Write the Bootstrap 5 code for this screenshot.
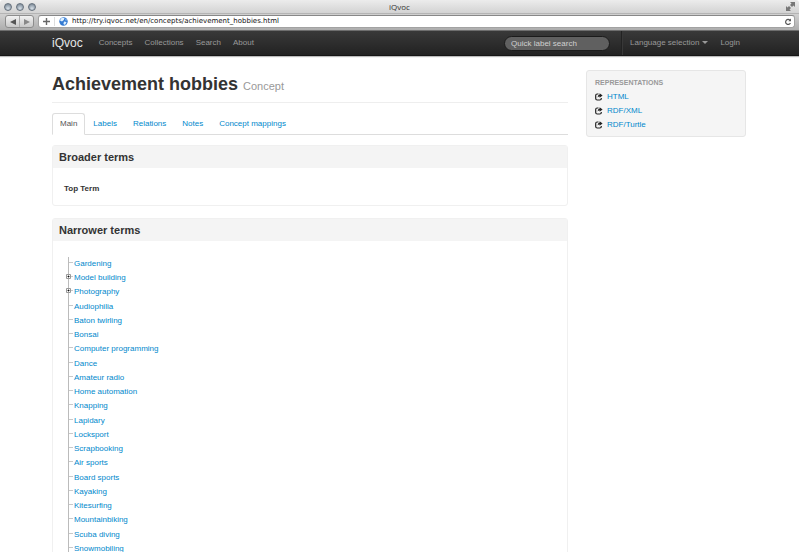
<!DOCTYPE html>
<html lang="en">
<head>
<meta charset="utf-8">
<meta name="viewport" content="width=device-width, initial-scale=1">
<title>iQvoc</title>
<link href="https://cdn.jsdelivr.net/npm/bootstrap@5.3.0/dist/css/bootstrap.min.css" rel="stylesheet">
<style>
html, body { height: 100%; }
body { font-family: "Liberation Sans", Arial, sans-serif; font-size: 8px; line-height: 14px; color: #333; background: #fff; }
a { color: #0088cc; text-decoration: none; }
.viewport { height: 100vh; }

/* browser window */
.window-top { background: linear-gradient(#ececec, #d2d2d2 45%, #adadad); border-bottom: 1px solid #6e6e6e; border-radius: 3px 3px 0 0; }
.title-row { height: 14px; padding: 0 4px; font-family: "Open Sans", "Noto Sans", sans-serif; font-size: 8px; line-height: 14px; border-bottom: 1px solid #b4b4b4; }
.lights, .expand { width: 36px; }
.light { width: 8px; height: 8px; border: 1px solid #66717d; border-radius: 50%; background: radial-gradient(circle at 50% 75%, #d8e1e9, #8794a1 75%); }
.tool-row { height: 16px; padding: 1px 4px 2px 5px; }
.history { height: 13px; width: 29px; border: 1px solid #8d8d8d; border-radius: 3px; background: linear-gradient(#f2f2f2, #c8c8c8); }
.history button, .plain-btn { border: 0; background: none; padding: 0; line-height: 0; }
.history button + button { border-left: 1px solid #aaa; }
.address { height: 13px; background: #fff; border: 1px solid #a2a2a2; border-top-color: #888; border-radius: 3px; padding: 0 2px 0 0; }
.address .plus { width: 16px; height: 9px; border-right: 1px solid #ddd; }
.url { border: 0; outline: 0; padding: 0; background: none; font-family: "DejaVu Sans", sans-serif; font-size: 7px; line-height: 11px; height: 11px; color: #111; }

/* site bar */
.site-bar { height: 25px; padding: 0; background: linear-gradient(#393939, #222); border-bottom: 1px solid #161616; box-shadow: 0 1px 1px #bbb; }
.side-pad { padding-left: 52px; padding-right: 53px; }
.site-bar .navbar-brand { font-size: 12px; line-height: 24px; padding: 0; margin: 0 10px 0 0; color: #e6e6e6; }
.site-bar .navbar-nav .nav-link { font-size: 8px; line-height: 24px; padding: 0 6px; color: #999; }
.quick { width: 106px; height: 15px; border: 1px solid #1b1b1b; border-radius: 8px; background: #606060; color: #ddd; font-size: 8px; padding: 0 6px; }
.quick::placeholder { color: #d0d0d0; opacity: 1; }
.split { width: 2px; height: 24px; border-left: 1px solid #222; border-right: 1px solid #383838; margin: 0 1px 0 11px; }
.site-bar .dropdown-toggle::after { border-width: 3px 3px 0; margin-left: 3px; vertical-align: 1px; }

/* content */
.page-row { --bs-gutter-x: 18px; padding-top: 14px; }
.page-title { font-size: 18px; line-height: 24px; font-weight: 700; padding: 2px 0 4px; margin: 0 0 10px; border-bottom: 1px solid #eee; }
.page-title small { font-size: 11px; font-weight: 400; color: #999; }
.page-tabs { border-bottom: 1px solid #ddd; margin-bottom: 10px; }
.page-tabs .nav-link { font-size: 8px; line-height: 14px; padding: 3px 7px; color: #0088cc; border-radius: 3px 3px 0 0; }
.page-tabs .nav-link.active { color: #555; border-color: #ddd #ddd #fff; }
.panel { border: 1px solid #f0f0f0; border-radius: 3px; margin-bottom: 12px; }
.panel-title { margin: 0; background: #f4f4f4; font-size: 11px; line-height: 22px; font-weight: 700; padding: 0 6px; }
.panel-text { padding: 14px 11px 9px; }
.panel-tree { padding: 16px 12px; }
.tree { display: grid; min-height: 299px; margin: 0; padding: 0; list-style: none; }
.tree li { position: relative; border-left: 1px solid #bbb; margin-left: 3px; padding-left: 5px; }
.tree li::before { content: ""; position: absolute; left: 0; top: 5px; width: 4px; border-top: 1px solid #c8c8c8; }
.tree button { position: absolute; left: -3px; top: 3px; width: 5px; height: 5px; padding: 0; border: 0; background: #fff; line-height: 0; z-index: 1; }
.tree svg { display: block; }
.side-box { background: #f5f5f5; border: 1px solid #e6e6e6; border-radius: 3px; padding: 5px 8px 4px; }
.side-title { font-size: 7px; line-height: 14px; font-weight: 700; color: #999; margin: 0; text-transform: uppercase; }
.side-box li { display: flex; align-items: center; gap: 4px; }
</style>
</head>
<body>
<svg class="d-none">
  <symbol id="share" viewBox="0 0 8 8"><path d="M3.500 1H2.200Q.7 1 .7 2.500v3Q.7 7 2.200 7h2.600Q6.300 7 6.300 5.500V5" fill="none" stroke="#222" stroke-width="1.200"/><path d="M4.600.2 7.600 2.500 4.600 4.800V3.400Q3.400 3.300 2.600 4.600 2.500 1.900 4.600 1.600z" fill="#222"/></symbol>
  <symbol id="expand" viewBox="0 0 5 5"><path d="M.5.5h4v4h-4z" fill="#fff" stroke="#999"/><path d="M2 1h1v3H2zM1 2h3v1H1z" fill="#999"/><path d="M2 2h1v1H2z" fill="#111"/></symbol>
</svg>
<div class="viewport d-flex flex-column overflow-hidden">
<header class="window-top flex-shrink-0">
  <div class="title-row d-flex align-items-center justify-content-between">
    <div class="lights d-flex gap-1"><span class="light"></span><span class="light"></span><span class="light"></span></div>
    <span>iQvoc</span>
    <div class="expand d-flex justify-content-end"><svg width="9" height="9" viewBox="0 0 9 9" fill="#777"><path d="M4 0H9v5L7.500 3.500 6 5 4 3 5.500 1.500zM0 4 1.500 5.500 3 4 5 6 3.500 7.500 5 9H0z"/></svg></div>
  </div>
  <div class="tool-row d-flex align-items-center gap-1">
    <div class="history d-flex flex-shrink-0">
      <button class="flex-fill" aria-label="Back"><svg width="6" height="6"><path d="M0 3 6 0v6z" fill="#555"/></svg></button>
      <button class="flex-fill" aria-label="Forward"><svg width="6" height="6"><path d="M6 3 0 0v6z" fill="#888"/></svg></button>
    </div>
    <div class="address d-flex align-items-center flex-fill">
      <button class="plain-btn plus" aria-label="Add bookmark"><svg width="7" height="7"><path d="M3.5 0v7M0 3.5h7" stroke="#666" stroke-width="1.4"/></svg></button>
      <svg class="mx-1" width="9" height="9" viewBox="0 0 9 9"><circle cx="4.5" cy="4.5" r="4.2" fill="#3279d2"/><path d="M3 .8 5.5 1 4.8 3 3 4.5 1 3.4A4 4 0 0 1 3 .8zM5 4.6l2.6.5L6 8l-1.6-.9zM6.5 1.5l1.3 1.6-1 .6z" fill="#dff1ff"/></svg>
      <input class="url flex-fill" type="text" aria-label="Address" value="http://try.iqvoc.net/en/concepts/achievement_hobbies.html">
      <button class="plain-btn" aria-label="Reload"><svg width="8" height="8" viewBox="0 0 8 8"><path d="M6 2.3A2.5 2.5 0 1 0 6.4 5" fill="none" stroke="#555" stroke-width="1.2"/><path d="M4.3 3.2H7V.5z" fill="#555"/></svg></button>
    </div>
  </div>
</header>

<nav class="site-bar navbar navbar-expand flex-shrink-0">
  <div class="container-fluid side-pad">
    <a class="navbar-brand" href="#">iQvoc</a>
    <div class="navbar-nav me-auto">
      <a class="nav-link" href="#">Concepts</a>
      <a class="nav-link" href="#">Collections</a>
      <a class="nav-link" href="#">Search</a>
      <a class="nav-link" href="#">About</a>
    </div>
    <input class="quick" type="search" placeholder="Quick label search" aria-label="Quick label search">
    <span class="split"></span>
    <div class="navbar-nav">
      <a class="nav-link dropdown-toggle" href="#" role="button" data-bs-toggle="dropdown">Language selection</a>
      <a class="nav-link" href="#">Login</a>
    </div>
  </div>
</nav>

<div class="container-fluid side-pad flex-fill overflow-hidden">
  <div class="row page-row">
    <main class="col-9">
      <h1 class="page-title">Achievement hobbies <small>Concept</small></h1>
      <nav class="nav nav-tabs page-tabs">
        <a class="nav-link active" href="#">Main</a>
        <a class="nav-link" href="#">Labels</a>
        <a class="nav-link" href="#">Relations</a>
        <a class="nav-link" href="#">Notes</a>
        <a class="nav-link" href="#">Concept mappings</a>
      </nav>
      <section class="panel">
        <h2 class="panel-title">Broader terms</h2>
        <div class="panel-text fw-bold">Top Term</div>
      </section>
      <section class="panel">
        <h2 class="panel-title">Narrower terms</h2>
        <div class="panel-tree">
          <ul class="tree">
            <li><a href="#">Gardening</a></li>
            <li><button aria-label="Expand Model building"><svg width="5" height="5"><use href="#expand"/></svg></button><a href="#">Model building</a></li>
            <li><button aria-label="Expand Photography"><svg width="5" height="5"><use href="#expand"/></svg></button><a href="#">Photography</a></li>
            <li><a href="#">Audiophilia</a></li>
            <li><a href="#">Baton twirling</a></li>
            <li><a href="#">Bonsai</a></li>
            <li><a href="#">Computer programming</a></li>
            <li><a href="#">Dance</a></li>
            <li><a href="#">Amateur radio</a></li>
            <li><a href="#">Home automation</a></li>
            <li><a href="#">Knapping</a></li>
            <li><a href="#">Lapidary</a></li>
            <li><a href="#">Locksport</a></li>
            <li><a href="#">Scrapbooking</a></li>
            <li><a href="#">Air sports</a></li>
            <li><a href="#">Board sports</a></li>
            <li><a href="#">Kayaking</a></li>
            <li><a href="#">Kitesurfing</a></li>
            <li><a href="#">Mountainbiking</a></li>
            <li><a href="#">Scuba diving</a></li>
            <li><a href="#">Snowmobiling</a></li>
          </ul>
        </div>
      </section>
    </main>
    <aside class="col-3">
      <div class="side-box">
        <h2 class="side-title">Representations</h2>
        <ul class="list-unstyled mb-0">
          <li><svg width="8" height="8"><use href="#share"/></svg><a href="#">HTML</a></li>
          <li><svg width="8" height="8"><use href="#share"/></svg><a href="#">RDF/XML</a></li>
          <li><svg width="8" height="8"><use href="#share"/></svg><a href="#">RDF/Turtle</a></li>
        </ul>
      </div>
    </aside>
  </div>
</div>
</div>
<script src="https://cdn.jsdelivr.net/npm/bootstrap@5.3.0/dist/js/bootstrap.bundle.min.js"></script>
</body>
</html>
